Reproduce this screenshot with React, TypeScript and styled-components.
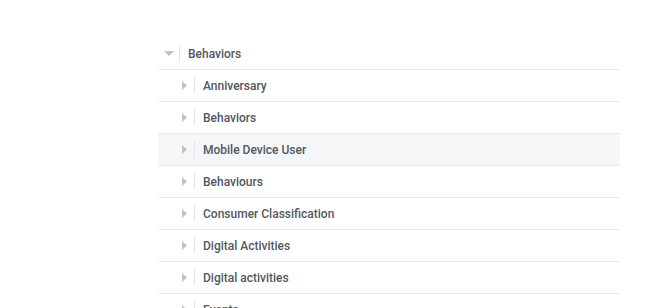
import React from "react";
import styled, { createGlobalStyle } from "styled-components";

const Global = createGlobalStyle`
  html, body { margin: 0; padding: 0; background: #fff; }
  body { font-family: Roboto, "Liberation Sans", Arial, sans-serif; }
`;

const Page = styled.div`
  padding: 38px 50px 0 158px;
  height: 308px;
  box-sizing: border-box;
  overflow: hidden;
`;

const List = styled.div`
  width: 462px;
  display: flex;
  flex-direction: column;
`;

const Row = styled.div<{ $depth: number; $active?: boolean }>`
  height: 31px;
  display: flex;
  align-items: center;
  padding-left: ${(p) => 1 + p.$depth * 15}px;
  border-bottom: 1px solid #e9eaeb;
  background: ${(p) => (p.$active ? "#f5f6f7" : "#fff")};
  flex-shrink: 0;
`;

const CaretBox = styled.div`
  width: 20px;
  height: 17px;
  display: flex;
  align-items: center;
  justify-content: center;
  border-right: 1px solid #e5e6e8;
`;

const Label = styled.span`
  margin-left: 8px;
  font-size: 12px;
  font-weight: 500;
  color: #53575d;
  line-height: 16px;
`;

const CaretDown = () => (
  <svg width="10" height="5" viewBox="0 0 10 5">
    <path d="M0 0 L10 0 L5 5 Z" fill="#bec3c9" />
  </svg>
);

const CaretRight = () => (
  <svg width="5" height="9" viewBox="0 0 5 9">
    <path d="M0 0 L5 4.5 L0 9 Z" fill="#bec3c9" />
  </svg>
);

const children = [
  "Anniversary",
  "Behaviors",
  "Mobile Device User",
  "Behaviours",
  "Consumer Classification",
  "Digital Activities",
  "Digital activities",
  "Events",
];

export default function App() {
  return (
    <>
      <Global />
      <Page>
        <List>
          <Row $depth={0}>
            <CaretBox>
              <CaretDown />
            </CaretBox>
            <Label>Behaviors</Label>
          </Row>
          {children.map((c, i) => (
            <Row key={i} $depth={1} $active={i === 2}>
              <CaretBox>
                <CaretRight />
              </CaretBox>
              <Label>{c}</Label>
            </Row>
          ))}
        </List>
      </Page>
    </>
  );
}
